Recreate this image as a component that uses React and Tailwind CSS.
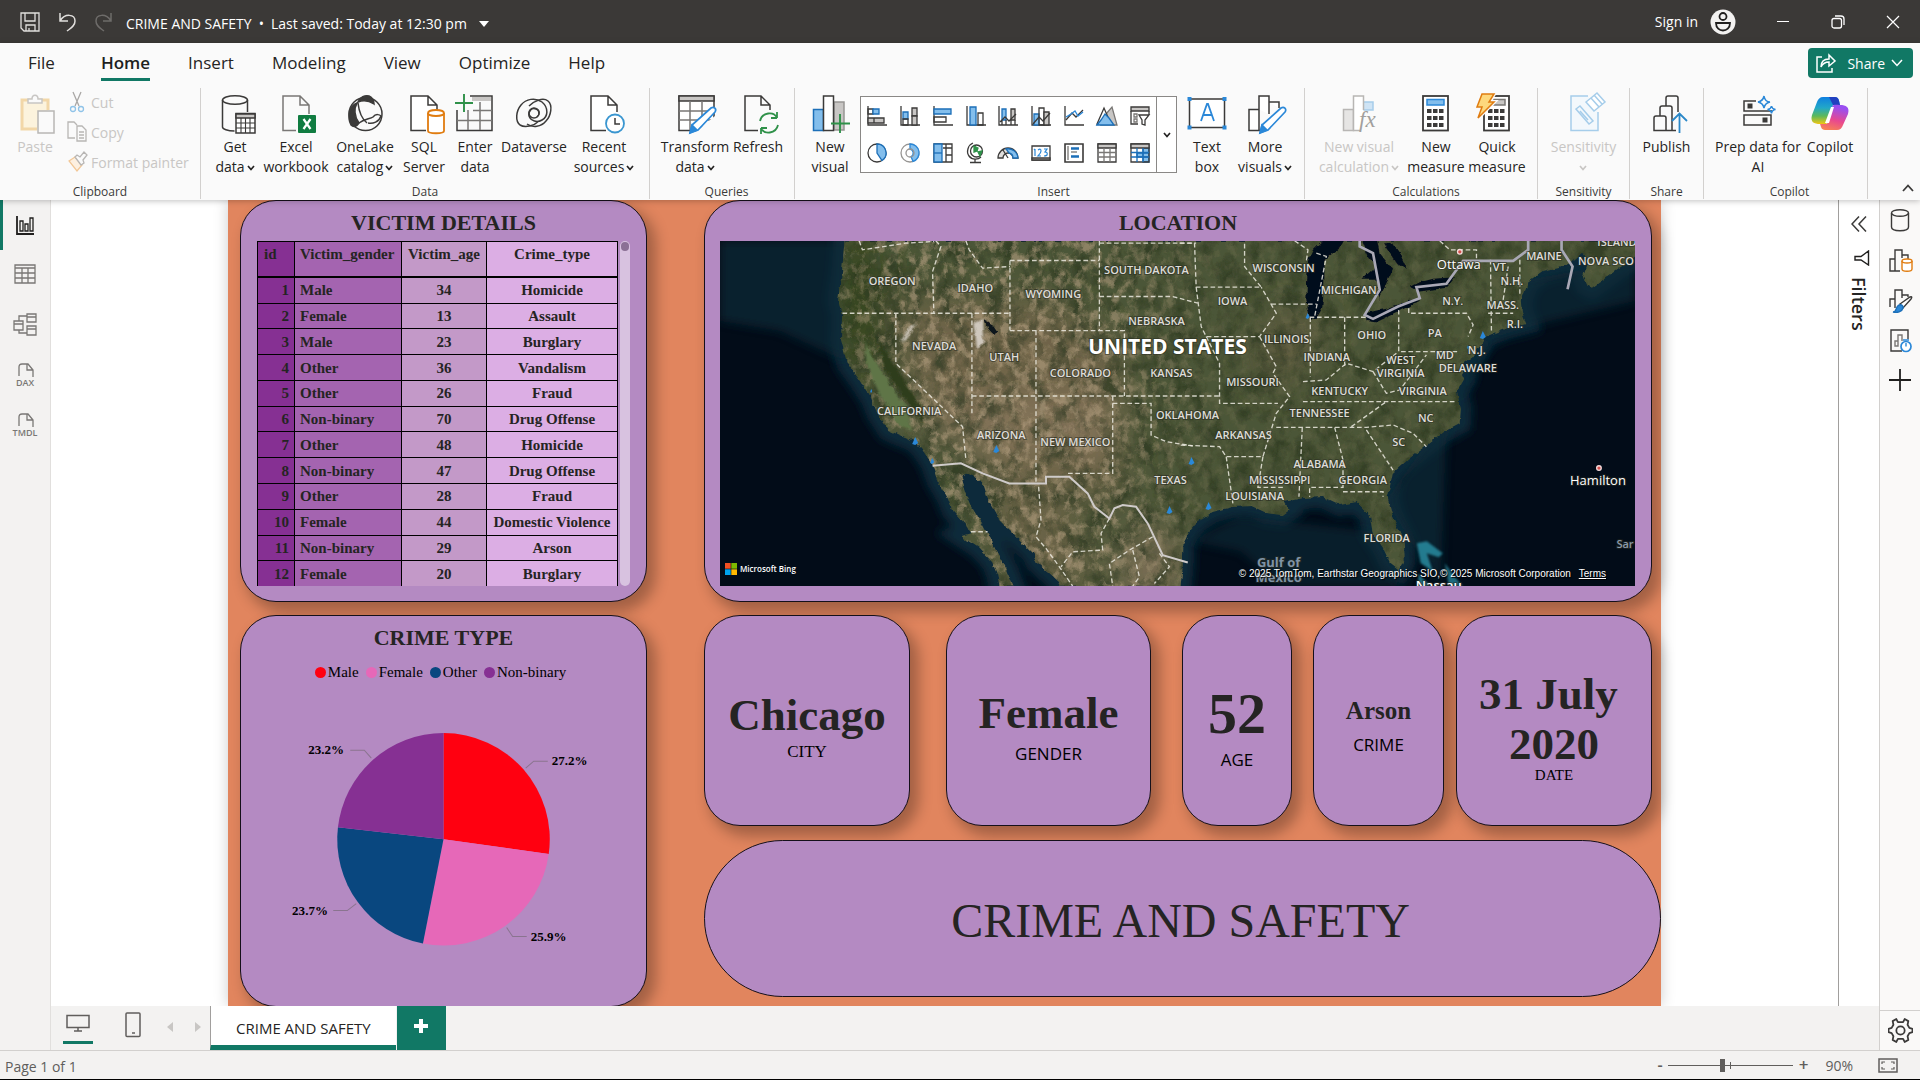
import React from "react";

const INK = "#3b3a39";
const GRAY = "#797775";
const BLUE = "#2b88d8";
const SKY = "#83beec";
const GREEN = "#2f9149";

/* ---------- large ribbon icons (40 x 40 grid) ---------- */
const Big = ({ children }) => (
  <svg viewBox="0 0 40 40" className="h-10 w-10 shrink-0 overflow-visible" fill="none" stroke={INK} strokeWidth="1.5">
    {children}
  </svg>
);
const Doc = () => (
  <>
    <path d="M22 37H7V2h17l9 9v8" fill="#fff" stroke="none" />
    <path d="M22 36.5H7V2h17l9 9v7M24 2v9h9" />
  </>
);

const PasteIcon = () => (
  <Big>
    <path d="M22 35H7V6h26v10" fill="#fcf3dd" stroke="#f2d7a8" strokeWidth="3" />
    <path d="M13 9V5h4c0-5 6-5 6 0h4v4z" fill="#fafafa" stroke="#c8c6c4" />
    <rect x="23" y="17" width="16" height="22" fill="#fafafa" stroke="#b8b6b4" />
  </Big>
);
const GetDataIcon = () => (
  <Big>
    <ellipse cx="20" cy="6" rx="12.5" ry="4.3" />
    <path d="M7.500 6v27c0 2 5 4 12 4M32.500 6v12" />
    <rect x="21" y="19.500" width="19" height="19.500" fill="#fff" />
    <path d="M21 20h19v4H21z" fill="#c8c6c4" />
    <path d="M21 29h19M21 34h19M26 24v15M30.500 24v15M35 24v15" strokeWidth="1.100" />
  </Big>
);
const ExcelIcon = () => (
  <Big>
    <path d="M20 36.500H7V2h17l9 9v9M24 2v9h9" stroke={GRAY} />
    <rect x="22" y="21" width="18" height="18" rx="1" fill="#107c41" stroke="none" />
    <path d="M27.500 25l7 10M34.500 25l-7 10" stroke="#fff" strokeWidth="2.200" />
  </Big>
);
const OneLakeIcon = () => (
  <Big>
    <circle cx="20.500" cy="20" r="16.500" />
    <path d="M13 8c2-5 7-7 11-6 4 2 5 6 5 8-6-4-11-4-16-2z" fill={INK} />
    <path d="M12 9C4 12 2 23 6 31c3 3 6 1 8-2C9 22 9 14 12 9z" fill={INK} />
    <path d="M13 9c1 9 4 16 9 20M14 29c5-4 11-4 14-6 3-4 7-2 8-1M23 29c5 1 11-1 13-7" />
  </Big>
);
const SqlIcon = () => (
  <Big>
    <Doc />
    <path d="M24 19v18c0 3 16 3 16 0V19" fill="#fff" stroke="#e07c10" strokeWidth="1.800" />
    <ellipse cx="32" cy="19" rx="8" ry="3" fill="#fff" stroke="#e07c10" strokeWidth="1.800" />
  </Big>
);
const EnterIcon = () => (
  <Big>
    <path d="M15 2h22v34.500H2V16" />
    <path d="M17 3h19v4H17z" fill="#c8c6c4" stroke="none" />
    <path d="M2 26.500h35M18 16.500h19M13 16v20M25 8v28" stroke={GRAY} />
    <path d="M9 0v18M0 9h18" stroke={GREEN} strokeWidth="1.900" />
  </Big>
);
const DataverseIcon = () => (
  <Big>
    <path d="M25 27c-5 5-14 7-19 4-5-4-4-14 1-20 5-6 14-8 21-3 7 6 6 15 0 18-5 3-11 1-13-4-1-5 3-9 7-7 4 1 4 6 1 8" />
    <path d="M15 12c5-5 14-9 19-5 5 4 3 15-2 20-5 6-13 7-19 3" />
    <circle cx="20" cy="19" r="5" />
  </Big>
);
const RecentIcon = () => (
  <Big>
    <Doc />
    <circle cx="31" cy="29.500" r="9" fill="#fff" stroke="#3a96d0" strokeWidth="1.800" />
    <path d="M31 24v6h5" />
  </Big>
);
const Pencil = () => (
  <path d="M15 39l2-8 19-17c3-2 6 1 4 4L23 36z" fill="#fff" stroke={BLUE} strokeWidth="1.700" />
);
const TransformIcon = () => (
  <Big>
    <rect x="4" y="2" width="35" height="34.500" fill="#fff" />
    <path d="M4 2h35v5H4z" fill="#c8c6c4" />
    <path d="M4 17h35M4 26h35M15 7v29M27 7v29" stroke={GRAY} />
    <path d="M18 40l22-18v18z" fill="#fafafa" stroke="none" />
    <Pencil />
    <path d="M15 39l2-8 5 5z" fill={BLUE} stroke={BLUE} />
  </Big>
);
const RefreshIcon = () => (
  <Big>
    <path d="M20 36.500H7V2h16l9 9v5M23 2v9h9" />
    <path d="M22 27c2-9 14-10 17-3v-6M39 24h-6M40 31c-2 9-14 10-17 3v6M23 34h6" stroke={GREEN} strokeWidth="1.800" />
  </Big>
);
const NewVisualIcon = () => (
  <Big>
    <rect x="24" y="8" width="10" height="28" fill="#c8c6c4" stroke="#979593" />
    <rect x="3.500" y="15.500" width="10" height="21" fill={SKY} stroke="#1c6fb8" />
    <rect x="13.500" y="2" width="10" height="34.500" fill="#fff" />
    <path d="M30 20v19M21 29.500h19" stroke={GREEN} strokeWidth="1.900" />
  </Big>
);
const TextBoxIcon = () => (
  <Big>
    <rect x="2.500" y="5" width="35" height="28.500" fill="#fff" />
    <path d="M14 27l6-17h1l6 17M16 21h9" stroke={BLUE} strokeWidth="1.800" />
    <g fill={BLUE} stroke="none">
      <rect x="0.500" y="3" width="4" height="4" />
      <rect x="35.500" y="3" width="4" height="4" />
      <rect x="0.500" y="31.500" width="4" height="4" />
      <rect x="35.500" y="31.500" width="4" height="4" />
    </g>
  </Big>
);
const MoreVisualsIcon = () => (
  <Big>
    <path d="M15 36.500H4v-21h10v21M14 15.500V2h10v18M24 8h10v6" fill="#fff" />
    <Pencil />
    <path d="M15 39l2-8 5 5z" fill={BLUE} stroke={BLUE} />
  </Big>
);
const CalcFxIcon = () => (
  <Big>
    <g stroke="#b8b6b4">
      <rect x="24" y="8" width="10" height="8" fill="#cfe4f5" stroke="#a6cdea" />
      <rect x="4.500" y="15.500" width="10" height="21" fill="#e6e5e4" />
      <path d="M22 36.500h-7.500V2h10v14" fill="#fff" />
    </g>
    <text x="20" y="33" fill="#a19f9d" stroke="none" fontSize="23" fontStyle="italic" fontFamily="'Liberation Serif', serif">
      fx
    </text>
  </Big>
);
const Keys = ({ y0 = 15 }) => (
  <g fill={INK} stroke="none">
    {[0, 1, 2].map((r) =>
      [0, 1, 2].map((c) => <rect key={`${r}${c}`} x={11 + c * 6} y={y0 + r * 7} width="4.500" height="4" />)
    )}
  </g>
);
const MeasureIcon = () => (
  <Big>
    <rect x="7" y="2" width="25" height="34.500" fill="#fff" strokeWidth="1.800" />
    <rect x="11" y="5.500" width="17" height="5.500" fill={SKY} stroke={BLUE} />
    <Keys />
  </Big>
);
const QuickIcon = () => (
  <Big>
    <rect x="7" y="2" width="25" height="34.500" fill="#fff" strokeWidth="1.800" />
    <rect x="17" y="5.500" width="11" height="5.500" fill="#c8c6c4" stroke={GRAY} />
    <Keys />
    <path d="M5 0h12l-5 8h5L1 24l4-11H0z" fill="#fdd87d" stroke="#fafafa" strokeWidth="4" />
    <path d="M5 0h12l-5 8h5L1 24l4-11H0z" fill="#fdd87d" stroke="#e07c10" />
  </Big>
);
const SensitivityIcon = () => (
  <Big>
    <g stroke="#a6cdea">
      <path d="M24 2H7v34.500h27V18" fill="#f3f8fc" />
      <path d="M12 15l4-3 13 15-4 3zM16 17l8 9" />
      <path d="M22 8l5-4 8 9-5 4zM27 4l6-5 8 9-6 5M30 1l8 9" fill="#fff" />
    </g>
  </Big>
);
const PublishIcon = () => (
  <Big>
    <path d="M7 36.500V24q0-2 2-2h8q2 0 2 2v12.500zM13 22v-8q0-2 2-2h8q2 0 2 2v22.500h-6M19 12V4q0-2 2-2h8q2 0 2 2v14M25 36.500h4" />
    <path d="M32.500 39V20M25 27l7.500-7.500L40 27" stroke="#2b88c8" strokeWidth="1.800" />
  </Big>
);
const PrepIcon = () => (
  <Big>
    <path d="M18 7H6v10h27v-1M6 21h27v10H6z" />
    <path d="M9.500 9.500h5v5h-5zM24.500 23.500h5v5h-5z" fill={INK} stroke="none" />
    <path d="M26 2q1 6 6 6-5 1-6 6-1-5-6-6 5-1 6-6zM33.500 12q.5 3 4 3.500-3.500.500-4 4-.5-3.500-4-4 3.500-.5 4-3.500z" stroke={BLUE} />
  </Big>
);
const CopilotIcon = () => (
  <Big>
    <defs>
      <linearGradient id="cpA" x1="0" y1="0" x2="0" y2="1">
        <stop offset="0" stopColor="#0f7fe0" />
        <stop offset=".4" stopColor="#22a8c8" />
        <stop offset=".7" stopColor="#5db95a" />
        <stop offset="1" stopColor="#f3c613" />
      </linearGradient>
      <linearGradient id="cpB" x1="0.300" y1="0" x2="0" y2="1">
        <stop offset="0" stopColor="#9a4ff0" />
        <stop offset=".5" stopColor="#e8488f" />
        <stop offset="1" stopColor="#fb8b4a" />
      </linearGradient>
    </defs>
    <g stroke="none">
      <path d="M13 3h12c4 0 4 4 5 8h-7l-5 17c-1 3-4 2-8 2-6 0-10-2-8-9L7 8c1-3 3-5 6-5z" fill="url(#cpA)" />
      <path d="M19 3h6c4 0 4 4 5 8h-7z" fill="#2140c0" />
      <path d="M27 36H15c-4 0-4-4-5-6h7l5-17c1-3 4-2 8-2 6 0 10 2 8 9l-5 11c-1 3-3 5-6 5z" fill="url(#cpB)" />
      <path d="M21 13h3l-5 16h-4z" fill="#fff" />
    </g>
  </Big>
);

/* ---------- small gallery icons (20 x 20 grid) ---------- */
const Sm = ({ children, size = "h-5 w-5" }) => (
  <svg viewBox="0 0 20 20" className={`${size} shrink-0 overflow-visible`} fill="none" stroke={INK} strokeWidth="1.300">
    {children}
  </svg>
);
const DB = "#1c6fb8";
const gallery = [
  ["Stacked bar chart", <><path d="M1 0v19h19" /><path d="M1 3h5v5H1z" /><path d="M6 3h6v5H6z" fill={SKY} stroke={DB} /><path d="M1 12h6v5H1zM7 12h10v5H7z" fill="#c8c6c4" /></>],
  ["Stacked column chart", <><path d="M1 0v19h19" /><path d="M3 6h5v7H3z" fill={SKY} stroke={DB} /><path d="M3 13h5v6H3z" /><path d="M12 2h5v8h-5z" fill="#c8c6c4" /><path d="M12 10h5v9h-5z" fill="#c8c6c4" /></>],
  ["Clustered bar chart", <><path d="M1 0v19h19" /><path d="M1 3h17v5H1z" fill={SKY} stroke={DB} /><path d="M1 11h12v5H1z" /></>],
  ["Clustered column chart", <><path d="M1 0v19h19" /><path d="M4 1h6v18H4z" fill={SKY} stroke={DB} /><path d="M12 7h5v12h-5z" /></>],
  ["Line and stacked column chart", <><path d="M1 0v19h19" /><path d="M4 3h4v11H4z" fill={SKY} stroke={DB} /><path d="M13 3h4v11h-4z" fill="#c8c6c4" /><path d="M2 16l5-5 4 4 7-7M4 14v5M8 14v5M13 14v5M17 14v5" /></>],
  ["Line and clustered column chart", <><path d="M1 0v19h19" /><path d="M3 8h5v11H3z" fill={SKY} stroke={DB} /><path d="M8 2h5v17H8z" /><path d="M13 6h5v13h-5z" fill="#c8c6c4" /><path d="M2 18l6-7 4 4 7-8" /></>],
  ["Line chart", <><path d="M1 0v19h19" /><path d="M2 14l6-7 4 4 7-7" /><path d="M2 11l5-3 4-3 3 5 5-4" stroke={BLUE} /></>],
  ["Area chart", <><path d="M9 8l6-7 5 18H4z" fill="#c8c6c4" stroke={GRAY} /><path d="M0 18L7 2l7 16z" fill="#fff" /><path d="M0 19l4-5 4-6 4 4 5 7z" fill={SKY} stroke={DB} /></>],
  ["Slicer", <><path d="M1 1h18v4H1z" fill="#c8c6c4" /><path d="M1 5v13h7M19 5v4" /><path d="M4 8h3v3H4zM4 13h3v3H4z" stroke={GRAY} /><path d="M9 9h10l-4 5v5l-3-1v-4z" fill="#fff" /></>],
  ["Pie chart", <><circle cx="10" cy="10" r="9" /><path d="M10 1a9 9 0 0 1 5 16.500L10 10z" fill={SKY} stroke={DB} /></>],
  ["Donut chart", <><circle cx="10" cy="10" r="9" stroke="#979593" /><path d="M10 1a9 9 0 0 1 3 17.500l-2-5A4 4 0 0 0 10 6z" fill={SKY} stroke={BLUE} /><circle cx="10" cy="10" r="4" stroke="#979593" /></>],
  ["Treemap", <><path d="M1 1h18v18H1zM13 1v18M10 5h9M13 12h6" /><path d="M1 1h8v18H1z" fill={SKY} stroke={DB} /><path d="M1 10h8" stroke={DB} /></>],
  ["Map", <><circle cx="10.500" cy="8" r="6" /><path d="M8 3l4 2-1 3-3 1zM12 9l4-1-2 5z" fill={GREEN} stroke={GREEN} /><path d="M7 0C2 2 0 9 3 13c3 4 9 4 12 1M9 16v3M4 19.500h11" /></>],
  ["Gauge", <><path d="M0 15a10 10 0 0 1 20 0h-5a5 5 0 0 0-10 0z" fill="#e1dfdd" /><path d="M8 6a10 10 0 0 1 12 9h-5a5 5 0 0 0-4-5z" fill={SKY} stroke={DB} /><path d="M10 15L5 7" /></>],
  ["Card", <><path d="M1 3h18v14H1z" /><path d="M1 15h18v2H1z" fill="#c8c6c4" /><path d="M4 6v7M3 7l1-1M7 7q3-2 3 1 0 2-3 5h3M13 6h3l-2 3q3 0 2 3-1 1-3 1" stroke={BLUE} strokeWidth="1.200" /></>],
  ["Multi-row card", <><path d="M1 1h18v18H1z" strokeWidth="1.600" /><path d="M4 3v14" stroke={GRAY} /><path d="M7 5.500h8M7 13.500h8" stroke={DB} strokeWidth="2.400" /><path d="M7 9h6" stroke={GRAY} /></>],
  ["Table", <><path d="M1 1h18v18H1z" /><path d="M1 1h18v4H1z" fill="#c8c6c4" /><path d="M1 9.500h18M1 14h18M7 5v14M13 5v14" stroke={GRAY} /></>],
  ["Matrix", <><path d="M13 5h6v14h-6zM7 10h12v4H7z" fill={SKY} stroke={DB} /><path d="M1 1h18v18H1z" /><path d="M1 1h18v4H1z" fill="#c8c6c4" /><path d="M1 9.500h18M1 14h18M7 5v14M13 5v14" stroke={DB} /></>],
];

/* ---------- ribbon pieces ---------- */
const Chev = ({ className = "" }) => (
  <svg viewBox="0 0 8 6" className={`inline-block h-[6px] w-2 ${className}`} fill="none" stroke="currentColor" strokeWidth="1.700">
    <path d="M1 1l3 3.500L7 1" />
  </svg>
);
const Tool = ({ icon, lines, chev, w, disabled }) => (
  <button type="button" disabled={disabled} className={`flex shrink-0 flex-col items-center ${w} ${disabled ? "text-[#c8c6c4]" : "text-[#252423]"}`}>
    {icon}
    <span className="mt-[3px] block text-center text-[14px] leading-5 whitespace-nowrap">
      {lines.map((l, i) => (
        <span key={i} className="block">
          {l}
          {chev && i === lines.length - 1 && <Chev className={l ? "ml-[2px]" : ""} />}
        </span>
      ))}
    </span>
  </button>
);
const Group = ({ label, className = "", children }) => (
  <section aria-label={label} className={`flex h-[111px] shrink-0 flex-col border-r border-[#d2d0ce] ${className}`}>
    <div className="flex flex-1 items-start pt-[6px]">{children}</div>
    <div className="text-center text-[12px] leading-[14px] text-[#3b3a39]">{label}</div>
  </section>
);
const ClipTool = ({ icon, label }) => (
  <button type="button" disabled className="flex h-[30px] items-center gap-1 text-[14px] text-[#c8c6c4]">
    {icon}
    {label}
  </button>
);

function TitleBar() {
  return (
    <header className="flex h-[43px] shrink-0 items-center bg-[#3b3937] text-white">
      <div className="flex items-center gap-[17px] pl-5">
        <button type="button" aria-label="Save">
          <Sm><g stroke="#e1dfdd"><path d="M1 1h18v18H4l-3-3zM5 1v8h10V1M6 19v-6h9v6M9 19v-3" /></g></Sm>
        </button>
        <button type="button" aria-label="Undo">
          <Sm><path d="M3 1v8h8M3 9C8 1 18 2 18 9c0 5-4 7-8 10" stroke="#e1dfdd" strokeWidth="1.500" /></Sm>
        </button>
        <button type="button" aria-label="Redo">
          <Sm><path d="M17 1v8H9M17 9C12 1 2 2 2 9c0 5 4 7 8 10" stroke="#6e6c6a" strokeWidth="1.500" /></Sm>
        </button>
      </div>
      <button type="button" className="ml-3 flex items-center pt-1 text-[14px]">
        <span>CRIME AND SAFETY</span>
        <span className="mx-[7px]">•</span>
        <span>Last saved: Today at 12:30 pm</span>
        <svg viewBox="0 0 10 6" className="ml-3 h-[6px] w-[10px]" fill="#fff"><path d="M0 0h10L5 6z" /></svg>
      </button>
      <div className="ml-auto flex items-center">
        <button type="button" className="flex items-center gap-3 text-[14px]">
          Sign in
          <svg viewBox="0 0 26 26" className="h-[26px] w-[26px]">
            <circle cx="13" cy="13" r="12.500" fill="#f3f2f1" />
            <g fill="none" stroke="#201f1e" strokeWidth="1.800"><circle cx="13" cy="7.500" r="3.500" /><path d="M6 14h14c0 10-14 10-14 0z" /></g>
          </svg>
        </button>
        <div className="ml-10 flex items-center gap-[41px] pr-5">
          <button type="button" aria-label="Minimize"><svg viewBox="0 0 14 14" className="h-[14px] w-[14px]" stroke="#fff"><path d="M1 6.500h12" /></svg></button>
          <button type="button" aria-label="Restore"><svg viewBox="0 0 14 14" className="h-[14px] w-[14px]" stroke="#fff" fill="none" strokeWidth="1.300"><rect x="1" y="3.500" width="9.500" height="9.500" rx="2" /><path d="M4 1h6q3 0 3 3v6" /></svg></button>
          <button type="button" aria-label="Close"><svg viewBox="0 0 14 14" className="h-[14px] w-[14px]" stroke="#fff" strokeWidth="1.200"><path d="M1 1l12 12M13 1L1 13" /></svg></button>
        </div>
      </div>
    </header>
  );
}

function Ribbon() {
  return (
    <div className="relative z-10 shrink-0 bg-[#fafafa] shadow-[0_1px_6px_rgba(0,0,0,0.25)]">
      <div className="flex h-[45px] items-start justify-between">
        <nav className="flex gap-[38px] pl-7 text-[17px] leading-6 text-[#252423]">
          {["File", "Home", "Insert", "Modeling", "View", "Optimize", "Help"].map((t) => (
            <button key={t} type="button" className={`h-[38px] border-b-[3px] pt-1 ${t === "Home" ? "ml-2 border-[#117865] font-semibold text-[#201f1e]" : "border-transparent"}`}>
              {t}
            </button>
          ))}
        </nav>
        <button type="button" className="mt-[5px] mr-[7px] flex h-[30px] items-center rounded bg-[#117865] pr-[10px] pl-2 text-[14px] text-white">
          <Sm><path d="M6 4H1v15h15v-4M5 14c0-6 3-8 8-8V2l6 6-6 5V9c-4 0-6 1-8 5z" stroke="#fff" strokeWidth="1.500" /></Sm>
          <span className="ml-[11px]">Share</span>
          <svg viewBox="0 0 12 8" className="ml-[6px] h-2 w-3" fill="none" stroke="#fff" strokeWidth="1.500"><path d="M1 1l5 5.500L11 1" /></svg>
        </button>
      </div>
      <div className="flex h-28 items-start">
        <Group label="Clipboard" className="w-[201px]">
          <Tool w="w-16 ml-[3px]" icon={<PasteIcon />} lines={["Paste"]} disabled />
          <div className="-mt-[7px]">
            <ClipTool label="Cut" icon={<Sm><path d="M6 0l6 14M14 0L8 14" stroke="#a9a7a5" /><circle cx="6" cy="17" r="2.500" stroke="#8fc3e8" /><circle cx="14" cy="17" r="2.500" stroke="#8fc3e8" /></Sm>} />
            <ClipTool label="Copy" icon={<Sm><path d="M8 16H1V0h6l3 3M10 4h5l4 4v11h-9zM12 10h5M12 13h5M12 16h5" stroke="#b8b6b4" /></Sm>} />
            <ClipTool label="Format painter" icon={<Sm><path d="M2 9l6-4 7 8-5 6z" fill="#fdf0e0" stroke="#f2c796" /><path d="M8 5l2-2 3 2 4-5 3 3-4 5 1 3-3 2z" fill="#fafafa" stroke="#b8b6b4" /></Sm>} />
          </div>
        </Group>
        <Group label="Data" className="w-[449px] px-[7px]">
          <Tool w="w-[54px]" icon={<GetDataIcon />} lines={["Get", "data"]} chev />
          <Tool w="w-[68px]" icon={<ExcelIcon />} lines={["Excel", "workbook"]} />
          <Tool w="w-[70px]" icon={<OneLakeIcon />} lines={["OneLake", "catalog"]} chev />
          <Tool w="w-12" icon={<SqlIcon />} lines={["SQL", "Server"]} />
          <Tool w="w-[54px]" icon={<EnterIcon />} lines={["Enter", "data"]} />
          <Tool w="w-16" icon={<DataverseIcon />} lines={["Dataverse"]} />
          <Tool w="w-[76px]" icon={<RecentIcon />} lines={["Recent", "sources"]} chev />
        </Group>
        <Group label="Queries" className="w-[145px] pl-[9px]">
          <Tool w="w-[72px]" icon={<TransformIcon />} lines={["Transform", "data"]} chev />
          <Tool w="w-[54px]" icon={<RefreshIcon />} lines={["Refresh"]} />
        </Group>
        <Group label="Insert" className="w-[510px] pl-2">
          <Tool w="w-[54px]" icon={<NewVisualIcon />} lines={["New", "visual"]} />
          <div className="ml-[3px] mt-[2px] flex h-[77px] w-[317px] border border-[#8a8886] bg-white">
            <div className="grid flex-1 grid-cols-9 items-center justify-items-center">
              {gallery.map(([name, art]) => (
                <button key={name} type="button" aria-label={name}><Sm>{art}</Sm></button>
              ))}
            </div>
            <button type="button" aria-label="More chart types" className="flex w-5 items-center justify-center border-l border-[#8a8886] text-[#252423]"><Chev /></button>
          </div>
          <Tool w="w-[60px]" icon={<TextBoxIcon />} lines={["Text", "box"]} />
          <Tool w="w-14" icon={<MoreVisualsIcon />} lines={["More", "visuals"]} chev />
        </Group>
        <Group label="Calculations" className="w-[233px] pl-[10px]">
          <Tool w="w-[88px]" icon={<CalcFxIcon />} lines={["New visual", "calculation"]} chev disabled />
          <Tool w="w-[66px]" icon={<MeasureIcon />} lines={["New", "measure"]} />
          <Tool w="w-14" icon={<QuickIcon />} lines={["Quick", "measure"]} />
        </Group>
        <Group label="Sensitivity" className="w-[92px]">
          <Tool w="w-[91px]" icon={<SensitivityIcon />} lines={["Sensitivity", ""]} chev disabled />
        </Group>
        <Group label="Share" className="w-[74px]">
          <Tool w="w-[73px]" icon={<PublishIcon />} lines={["Publish"]} />
        </Group>
        <Group label="Copilot" className="w-[164px] pl-2">
          <Tool w="w-[92px]" icon={<PrepIcon />} lines={["Prep data for", "AI"]} />
          <Tool w="w-[52px]" icon={<CopilotIcon />} lines={["Copilot"]} />
        </Group>
        <button type="button" aria-label="Collapse ribbon" className="mr-[6px] mb-2 ml-auto self-end">
          <svg viewBox="0 0 12 8" className="h-2 w-3" fill="none" stroke={INK} strokeWidth="1.800"><path d="M1 7l5-5.500L11 7" /></svg>
        </button>
      </div>
    </div>
  );
}

/* ---------- left navigation ---------- */
const NavSvg = ({ children, color = GRAY }) => (
  <svg viewBox="0 0 24 24" className="h-6 w-6 overflow-visible" fill="none" stroke={color} strokeWidth="1.300">{children}</svg>
);
const FileTag = ({ label }) => (
  <NavSvg>
    <path d="M6 13V4q0-3 3-3h6l5 6v7M14 1v6h6" />
    <text x="12" y="23" textAnchor="middle" fontSize="9" fill={GRAY} stroke="none" fontWeight="600" fontFamily="'Open Sans', sans-serif">{label}</text>
  </NavSvg>
);
function LeftNav() {
  const items = [
    ["Report view", <NavSvg color="#201f1e"><path d="M4 3v18h17" strokeWidth="1.800" /><path d="M7 8h3v10H7zM12 11h3v7h-3zM17 5h3v13h-3z" /></NavSvg>],
    ["Table view", <NavSvg><path d="M2 2h20v18H2zM2 5h20M2 10h20M2 15h20M9 5v15M15 5v15" /></NavSvg>],
    ["Model view", <NavSvg><path d="M1 8h9v9H1zM1 11h9M14 1h9v8h-9zM14 4h9M14 13h9v9h-9zM14 16h9M6 8V3h8M6 17v3h8" /></NavSvg>],
    ["DAX query view", <FileTag label="DAX" />],
    ["TMDL view", <FileTag label="TMDL" />],
  ];
  return (
    <nav className="flex w-[51px] shrink-0 flex-col border-r border-[#e1dfdd] bg-[#f3f2f1]">
      {items.map(([name, art], i) => (
        <button key={name} type="button" aria-label={name} className={`flex h-[50px] items-center justify-center border-l-[3px] pr-[3px] ${i === 0 ? "border-[#117865]" : "border-transparent"}`}>
          {art}
        </button>
      ))}
    </nav>
  );
}

/* ---------- report visuals ---------- */
const CARD = "border border-[#15101a] bg-[#b48ac2] shadow-[7px_8px_14px_2px_rgba(0,0,0,0.28)]";
const SERIF = "font-['Liberation_Serif','Times_New_Roman',serif]";

const victims = [
  ["Male", 34, "Homicide"], ["Female", 13, "Assault"], ["Male", 23, "Burglary"], ["Other", 36, "Vandalism"],
  ["Other", 26, "Fraud"], ["Non-binary", 70, "Drug Offense"], ["Other", 48, "Homicide"], ["Non-binary", 47, "Drug Offense"],
  ["Other", 28, "Fraud"], ["Female", 44, "Domestic Violence"], ["Non-binary", 29, "Arson"], ["Female", 20, "Burglary"],
];
const CardTitle = ({ children }) => (
  <h2 className={`h-10 pt-2 text-center text-[22px] leading-7 font-bold text-[#252423] ${SERIF}`}>{children}</h2>
);

function VictimDetails() {
  return (
    <section className={`rounded-[36px] pb-[15px] ${CARD}`}>
      <CardTitle>VICTIM DETAILS</CardTitle>
      <div className="mx-4 flex h-[345px] gap-[2px]">
        <table className={`h-full flex-1 table-fixed border-collapse text-[15px] leading-4 font-bold text-[#252423] ${SERIF}`}>
          <colgroup>
            <col className="w-[37px]" /><col className="w-[107px]" /><col className="w-[85px]" /><col />
          </colgroup>
          <thead>
            <tr className="h-[35px] align-top">
              <th className="border border-b-2 border-black bg-[#863093] pt-1 pl-[6px] text-left">id</th>
              <th className="border border-b-2 border-black bg-[#a464b0] pt-1 pl-[5px] text-left">Victim_gender</th>
              <th className="border border-b-2 border-black bg-[#c399c8] pt-1 text-center">Victim_age</th>
              <th className="border border-b-2 border-black bg-[#dcaee4] pt-1 text-center">Crime_type</th>
            </tr>
          </thead>
          <tbody>
            {victims.map(([g, a, c], i) => (
              <tr key={i}>
                <td className="border border-b-0 border-black bg-[#863093] pr-[5px] text-right">{i + 1}</td>
                <td className="border border-b-0 border-black bg-[#a464b0] pl-[5px]">{g}</td>
                <td className="border border-b-0 border-black bg-[#c399c8] text-center">{a}</td>
                <td className="border border-b-0 border-black bg-[#dcaee4] text-center whitespace-nowrap">{c}</td>
              </tr>
            ))}
          </tbody>
        </table>
        <div className="w-[10px] rounded-full bg-[#d8c2e0] p-px"><div className="h-[9px] rounded-full bg-[#8b7095]" /></div>
      </div>
    </section>
  );
}

const slices = [
  { name: "Male", value: 27.2, color: "#ff0010", dot: "bg-[#ff0010]", line: "284,78 292,71 306,71", tx: 310, ty: 75 },
  { name: "Female", value: 25.9, color: "#e668b8", dot: "bg-[#e668b8]", line: "265,237 271,246 285,246", tx: 289, ty: 250 },
  { name: "Other", value: 23.7, color: "#09477f", dot: "bg-[#09477f]", line: "92,220 106,220 115,213", tx: 51, ty: 224 },
  { name: "Non-binary", value: 23.2, color: "#863093", dot: "bg-[#863093]", line: "109,60 123,60 130,68", tx: 67, ty: 64 },
];
function CrimeType() {
  const cx = 202, cy = 149, r = 106;
  let acc = 0;
  const pt = (p) => {
    const a = (p / 100) * 2 * Math.PI;
    return `${cx + r * Math.sin(a)} ${cy - r * Math.cos(a)}`;
  };
  return (
    <section className={`-mb-px flex-1 rounded-[36px] ${CARD}`}>
      <CardTitle>CRIME TYPE</CardTitle>
      <ul className={`mt-[6px] flex justify-center gap-[7px] pr-[6px] text-[15px] leading-5 text-black ${SERIF}`}>
        {slices.map((s) => (
          <li key={s.name} className="flex items-center gap-[2px]">
            <span className={`h-[11px] w-[11px] rounded-full ${s.dot}`} />{s.name}
          </li>
        ))}
      </ul>
      <svg viewBox="0 0 404 300" className="mt-2 w-full" role="img" aria-label="Crime share by gender">
        {slices.map((s) => {
          const a = pt(acc);
          acc += s.value;
          return <path key={s.name} d={`M${cx} ${cy}L${a}A${r} ${r} 0 0 1 ${pt(acc)}Z`} fill={s.color} />;
        })}
        {slices.map((s) => (
          <g key={s.name}>
            <polyline points={s.line} fill="none" stroke="#8a748f" />
            <text x={s.tx} y={s.ty} fontSize="13" fontWeight="700" fontFamily="'Liberation Serif', serif">{s.value}%</text>
          </g>
        ))}
      </svg>
    </section>
  );
}

const LAND =
  "M125 -9L122 31 118 59 122 74 121 99 127 122 139 139 151 157 157 172 168 189 179 194 194 200 201 207 211 222 217 239 227 256 232 269 246 284 251 292 241 295 259 307 272 321 277 334 281 355H297L287 329 277 312 269 296 261 281 252 266 246 252 241 236 245 231 256 237 264 246 269 261 279 279 296 296 312 312 316 321 336 339 345 355H459L462 326 463 302 468 292 477 281 492 271 512 266 531 265 546 272 562 274 569 269 564 261 582 257 602 256 619 264 636 261 649 274 652 292 662 306 669 321 679 329 684 319 683 299 672 276 667 256 672 232 689 217 706 204 722 191 739 182 740 168 736 151 744 137 739 126 752 116 761 102 764 96 786 87 806 82 802 72 801 59 807 42 822 31 839 27 852 21 862 12 868 20 862 36 865 44 871 47 889 34 925 8V-9Z";
const places = [
  ["OREGON", 172, 44], ["IDAHO", 255, 51], ["WYOMING", 333, 57], ["SOUTH DAKOTA", 426, 33], ["NEBRASKA", 436, 84], ["NEVADA", 214, 109],
  ["UTAH", 284, 120], ["COLORADO", 360, 136], ["KANSAS", 451, 136], ["CALIFORNIA", 189, 174], ["ARIZONA", 281, 198], ["NEW MEXICO", 355, 205],
  ["OKLAHOMA", 467, 178], ["TEXAS", 450, 243], ["WISCONSIN", 563, 31], ["MICHIGAN", 628, 53], ["IOWA", 512, 64], ["ILLINOIS", 566, 102],
  ["INDIANA", 606, 120], ["OHIO", 651, 98], ["PA", 714, 96], ["N.Y.", 732, 64], ["MASS.", 782, 68], ["N.H.", 791, 44], ["VT.", 780, 30],
  ["MAINE", 823, 19], ["NOVA SCO", 885, 24], ["ISLAND", 896, 5], ["R.I.", 794, 87], ["N.J.", 756, 113], ["MD", 724, 118], ["DELAWARE", 747, 131],
  ["WEST", 680, 123], ["VIRGINIA", 680, 136], ["VIRGINIA", 702, 154], ["KENTUCKY", 619, 154], ["MISSOURI", 532, 145], ["TENNESSEE", 599, 176],
  ["NC", 705, 181], ["SC", 678, 205], ["ARKANSAS", 523, 198], ["ALABAMA", 599, 227], ["MISSISSIPPI", 559, 243], ["GEORGIA", 642, 243],
  ["LOUISIANA", 534, 259], ["FLORIDA", 666, 301],
];
const pins = [[151, 150, 1], [195, 200, 3], [212, 220, 2], [276, 208, 3], [471, 220, 3], [449, 269, 3], [488, 265, 3], [587, 75, 2], [762, 94, 3], [747, 106, 1]];

function SatelliteMap() {
  return (
    <svg viewBox="0 0 914 345" preserveAspectRatio="xMidYMid slice" className="h-full w-full" role="img" aria-label="Map of the United States" fontFamily="'Open Sans', sans-serif">
      <defs>
        <clipPath id="land"><path d={LAND} /></clipPath>
        <filter id="b30"><feGaussianBlur stdDeviation="18" /></filter>
        <filter id="b6"><feGaussianBlur stdDeviation="5" /></filter>
        <filter id="b1"><feGaussianBlur stdDeviation="1" /></filter>
        <filter id="light" x="0" y="0" width="1" height="1" colorInterpolationFilters="sRGB">
          <feTurbulence type="fractalNoise" baseFrequency="0.110 0.085" numOctaves="5" seed="8" />
          <feColorMatrix values="0 0 0 0 0.690  0 0 0 0 0.610  0 0 0 0 0.490  3.400 0 0 0 -1.550" />
        </filter>
        <filter id="dark" x="0" y="0" width="1" height="1" colorInterpolationFilters="sRGB">
          <feTurbulence type="fractalNoise" baseFrequency="0.060 0.045" numOctaves="6" seed="21" />
          <feColorMatrix values="0 0 0 0 0.160  0 0 0 0 0.210  0 0 0 0 0.120  0 2.800 0 0 -1.150" />
        </filter>
        <filter id="rough"><feTurbulence type="fractalNoise" baseFrequency="0.120" numOctaves="3" seed="2" /><feDisplacementMap in="SourceGraphic" scale="5" xChannelSelector="R" yChannelSelector="G" /></filter>
        <linearGradient id="westFade"><stop offset=".12" stopColor="#fff" stopOpacity=".45" /><stop offset=".22" stopColor="#fff" stopOpacity=".85" /><stop offset=".42" stopColor="#fff" stopOpacity=".8" /><stop offset=".54" stopColor="#fff" stopOpacity=".16" /><stop offset="1" stopColor="#fff" stopOpacity=".1" /></linearGradient>
        <mask id="west"><rect width="914" height="345" fill="url(#westFade)" /></mask>
      </defs>
      <rect width="914" height="345" fill="#020c18" />
      <path d={LAND} fill="none" stroke="#0a2c3a" strokeWidth="22" filter="url(#b6)" />
      <path d="M0 0H125V120L60 90 0 80zM760 100L830 80 914 60V20L800 40 740 160 700 210 665 260 690 300 720 345 725 200z" fill="#0a2937" opacity=".7" filter="url(#b6)" />
      <path d="M470 300L520 275 650 290 680 345H560L520 310z" fill="#0a2937" opacity=".6" filter="url(#b6)" />
      <g filter="url(#rough)">
        <g clipPath="url(#land)">
          <rect width="914" height="345" fill="#4c5637" />
          <g filter="url(#b30)">
            <path d="M180 60L330 60 400 110 400 260 260 220 190 150z" fill="#6f6549" />
            <path d="M240 160L380 160 400 210 300 210 190 190z" fill="#85745a" />
            <path d="M330 210L380 345H290L260 230z" fill="#6b6446" />
            <path d="M400 290h60v70h-60z" fill="#7a6e54" />
            <path d="M560 70L610 80 560 150 530 120z" fill="#605c3f" />
            <path d="M120 0h40v120h-40z" fill="#33421f" />
          </g>
          <rect width="914" height="345" filter="url(#dark)" opacity=".65" />
          <g mask="url(#west)"><rect width="914" height="345" filter="url(#light)" opacity=".8" /></g>
          <path d="M145 100L155 120 185 165 192 190 180 186 160 155 146 122z" fill="#5f7446" filter="url(#b1)" />
          <path d="M155 95L175 125 200 165 205 185 190 165 165 130z" fill="#2d3c1f" filter="url(#b1)" />
          <path d="M253 82L263 78 264 100 257 108zM190 86L196 82 186 98 180 102z" fill="#cfc8bd" filter="url(#b1)" />
          <path d="M264 79L272 84 277 91 274 95 268 89z" fill="#0b141b" />
        </g>
        <g transform="translate(459 -41) scale(0.3333)" fill="#060e1c">
          <path d="M385 180L400 150 440 110H500L480 145 435 180 434 250 428 325 410 356H390L380 300z" />
          <path d="M540 110L565 170 588 200 545 240 590 240 600 300 620 250 640 210 600 160 590 110zM610 130L650 190 682 207 660 160 640 130z" />
          <path d="M552 340L562 360 595 365 650 338 722 302 690 300 620 327zM690 262L715 276 800 264 826 232 760 237 720 247z" />
        </g>
      </g>
      <path d="M696 302L706 300 722 312 718 316 706 312 712 330 700 322z" fill="#2b93a8" opacity=".8" filter="url(#b1)" />
      <path d="M724 322L736 338 742 345H728zM697 332L710 345H698z" fill="#2b93a8" opacity=".7" filter="url(#b1)" />
      <g fill="none" stroke="#eceae0" strokeOpacity=".85" strokeWidth="4" strokeDasharray="14 8">
        <path
          transform="translate(-21 -41) scale(0.3333)"
          d="M480 123L490 150 620 130 705 125M710 123L725 140 700 215 704 340M430 340H932M932 182V392M932 182H1200M1200 123V392M800 123L810 150 850 205 932 200M590 340V490L790 680 800 780M818 340V640M818 588H1560M932 392H1275V588M1010 392V845M1240 588V820H1100M1240 610H1355V705L1400 725 1480 738M1200 290H1420L1495 310M1200 130H1490M1018 860L1025 960 1010 1010 1040 1045 1080 1100 1120 1158M1230 955L1205 1000 1210 1050 1120 1055 1085 1100M1360 1010L1290 1050 1230 1090 1240 1158M1300 1050L1320 1130 1300 1158M1380 1060L1410 1100 1365 1150M815 995H865"
        />
        <path
          transform="translate(459 -41) scale(0.3333)"
          d="M0 130H45L50 262H245L195 200V130M50 262L65 380 80 410H240L290 340 245 262M275 313H410M80 410L120 490V610H295M240 410L290 500 280 520 330 590 290 640 250 770H140L120 740 0 735M140 770L160 910M392 352V530M390 352H560M495 352V500M657 330V455H840M687 325V340H860L880 375 865 410M925 340H1000M932 180L935 400M970 300L985 200M1020 180V290M370 545L440 540 500 490 580 515 650 460M580 515L620 580 660 570 740 465M370 605H830M290 682H560L640 675 700 700 740 740M515 680L620 605M368 682L358 890M465 682L490 780V862H390V890M490 875H610V890M560 690L640 810M250 770L235 862H310M780 123L810 150H890V180M410 160L440 170 405 350M345 123L385 150 380 185"
        />
      </g>
      <g fill="none" stroke="#cfcbca" strokeWidth="6">
        <path transform="translate(-21 -41) scale(0.3333)" d="M700 797L785 790 850 820 930 850H1040V830H1110L1165 880 1185 920 1230 955 1245 925 1270 915 1310 920 1345 970 1390 1065 1465 1087" />
        <path transform="translate(459 -41) scale(0.3333)" stroke="#a9a8b5" strokeWidth="8" d="M540 123V140L580 160 600 270 555 345 580 357 655 320 720 295 710 262 800 252 850 183H1000L1045 150V123M1145 123V150L1178 200 1163 268" />
      </g>
      <g fill={BLUE}>
        {pins.map(([x, y, s]) => <path key={`${x}`} d={`M${x - s} ${y + s}L${x} ${y - s - 1}L${x + s} ${y + s - 1}L${x} ${y + s + 1}Z`} />)}
      </g>
      <g fontSize="11" fontWeight="600" fill="#dedcd8" stroke="#2a2d22" strokeOpacity=".55" strokeWidth="2" paintOrder="stroke" textAnchor="middle">
        {places.map(([t, x, y]) => <text key={`${t}${y}`} x={x} y={y}>{t}</text>)}
        <text x="447" y="113" fontSize="21" fontWeight="700" fill="#fff">UNITED STATES</text>
        <g fontSize="13" fontWeight="400" fill="#fff"><text x="738" y="28">Ottawa</text><text x="877" y="244">Hamilton</text></g>
        <g fontSize="13" fontWeight="700" fill="#7f93a5"><text x="558" y="326">Gulf of</text><text x="558" y="341">Mexico</text></g>
        <text x="904" y="307" fill="#8c9aa8">Sar</text>
        <text x="718" y="349" fontSize="13" fill="#fff">Nassau</text>
      </g>
      <g fill="#d4504c" stroke="#f5dcdc" strokeWidth="1.300"><circle cx="739" cy="11" r="2.300" /><circle cx="878" cy="227" r="2.300" /></g>
    </svg>
  );
}

function Location() {
  return (
    <section className={`mr-[9px] rounded-[36px] pb-[15px] ${CARD}`}>
      <CardTitle>LOCATION</CardTitle>
      <div className="relative mr-4 ml-[15px] h-[345px] overflow-hidden">
        <SatelliteMap />
        <div className="absolute bottom-[11px] left-[5px] flex items-center gap-[3px] text-[8px] font-semibold text-white">
          <svg viewBox="0 0 12 12" className="h-3 w-3"><path d="M0 0h5.700v5.700H0z" fill="#f25022" /><path d="M6.300 0H12v5.700H6.300z" fill="#7fba00" /><path d="M0 6.300h5.700V12H0z" fill="#00a4ef" /><path d="M6.300 6.300H12V12H6.300z" fill="#ffb900" /></svg>
          Microsoft Bing
        </div>
        <div className="absolute right-[29px] bottom-[6px] flex gap-2 font-['Liberation_Sans',Arial,sans-serif] text-[10px] leading-3 whitespace-nowrap text-white [text-shadow:1px_1px_1px_#000]">
          <span>© 2025 TomTom, Earthstar Geographics SIO,© 2025 Microsoft Corporation</span>
          <a href="#terms" className="underline">Terms</a>
        </div>
      </div>
    </section>
  );
}

const Kpi = ({ value, label, valueClass, labelClass, className = "" }) => (
  <section className={`flex flex-col items-center justify-center rounded-[36px] pt-3 text-center ${CARD} ${className}`}>
    <div className={`font-bold text-[#252423] ${SERIF} ${valueClass}`}>{value}</div>
    <div className={`text-black ${labelClass}`}>{label}</div>
  </section>
);

function Report() {
  return (
    <div className="flex min-w-0 flex-1 gap-[57px] bg-[#e1855e] pl-3 shadow-[0_0_14px_rgba(0,0,0,0.2)]">
      <div className="flex flex-[407_1_0%] flex-col gap-[13px]">
        <VictimDetails />
        <CrimeType />
      </div>
      <div className="flex flex-[957_1_0%] flex-col pb-[9px]">
        <Location />
        <div className="mt-[13px] mr-[9px] grid min-h-[211px] grid-cols-[206fr_241fr_141fr_152fr_208fr]">
          <Kpi value="Chicago" label="CITY" valueClass="text-[45px] leading-[50px]" labelClass={`text-[17px] leading-6 ${SERIF}`} />
          <Kpi value="Female" label="GENDER" className="ml-9" valueClass="text-[45px] leading-[50px]" labelClass="mt-1 text-[17px] leading-6" />
          <Kpi value="52" label="AGE" className="ml-[31px]" valueClass="text-[58px] leading-[64px]" labelClass="mt-[2px] text-[17px] leading-6" />
          <Kpi value="Arson" label="CRIME" className="ml-[21px]" valueClass="text-[25px] leading-7" labelClass="mt-2 text-[17px] leading-6" />
          <Kpi value={<>31 July{"\u00a0"}<br />2020</>} label="DATE" className="ml-3" valueClass="text-[45px] leading-[50px]" labelClass={`-mt-1 text-[15px] leading-5 ${SERIF}`} />
        </div>
        <section className="mt-[14px] flex min-h-[157px] flex-1 items-center justify-center rounded-[80px] border border-[#15101a] bg-[#b48ac2] pt-1 pr-1">
          <h1 className={`text-[48px] leading-[54px] text-[#252423] ${SERIF}`}>CRIME AND SAFETY</h1>
        </section>
      </div>
    </div>
  );
}

/* ---------- right panes ---------- */
function FiltersPane() {
  return (
    <aside className="flex w-[41px] shrink-0 flex-col items-center border-l border-[#a19f9d] bg-white pt-4">
      <button type="button" aria-label="Expand filters"><svg viewBox="0 0 16 16" className="h-4 w-4" fill="none" stroke={INK} strokeWidth="1.500"><path d="M8 0.500L1 8l7 7.500M15 0.500L8 8l7 7.500" /></svg></button>
      <svg viewBox="0 0 16 16" className="mt-[18px] ml-[5px] h-4 w-4" fill="none" stroke="#201f1e" strokeWidth="1.400"><path d="M14.500 1v14L7 10H1V6.500h6z" /></svg>
      <h2 className="mt-[11px] text-[18px] leading-6 font-semibold text-[#252423] [writing-mode:vertical-rl]">Filters</h2>
    </aside>
  );
}
function RightRail() {
  const art = [
    ["Data", <><ellipse cx="12" cy="5" rx="8.500" ry="3.300" /><path d="M3.500 5v14c0 5 17 5 17 0V5" /></>],
    ["Build", <><path d="M12 23H2V11h5M7 23V2h7v8M14 7h6v4" /><g stroke="#e07c10" fill="#fff"><path d="M14 13v8c0 3 10 3 10 0v-8" /><ellipse cx="19" cy="13" rx="5" ry="2" /></g></>],
    ["Format", <><path d="M2 19V11h5v9M7 11V2h7v8M14 7h6v2" /><path d="M12 16L22 9q3-1 1 2l-8 9z" fill="#fff" /><path d="M5 24c3 0 3-3 4-5 2-4 7-2 6 1-1 4-6 5-10 4z" fill={BLUE} stroke={DB} /></>],
    ["Performance", <><path d="M14 23H3V2h17v9" /><path d="M7 18v-5h3v5zM10 18V7h4v6" stroke={GRAY} /><circle cx="18" cy="18.500" r="5" fill="#fff" stroke={BLUE} strokeWidth="1.700" /><path d="M18 18.500V15M15 12h6" stroke={BLUE} /></>],
    ["Add", <path d="M1 12h22M12 1v22" stroke="#201f1e" strokeWidth="1.800" />],
  ];
  return (
    <aside className="flex w-[41px] shrink-0 flex-col border-l border-[#d2d0ce] bg-[#faf9f8]">
      <div className="flex flex-1 flex-col items-center">
        {art.map(([name, a]) => (
          <button key={name} type="button" aria-label={name} className="flex h-10 w-full items-center justify-center">
            <svg viewBox="0 0 24 24" className="h-6 w-6 overflow-visible" fill="none" stroke={INK} strokeWidth="1.400">{a}</svg>
          </button>
        ))}
      </div>
      <button type="button" aria-label="Settings" className="flex h-10 items-center justify-center border-t border-[#d2d0ce]">
        <svg viewBox="0 0 24 24" className="h-[25px] w-[25px]" fill="none" stroke={INK} strokeWidth="1.700" strokeLinejoin="round">
          <circle cx="12" cy="12" r="4" />
          <path d="M9.500 4L8 1 4.500 3l.7 3.500L3.500 9.500.5 10.500v3l3 1 1.700 3L4.500 21 8 23l1.500-3h5L16 23l3.500-2-.7-3.500 1.700-3 3-1v-3l-3-1-1.700-3L19.500 3 16 1l-1.500 3z" />
        </svg>
      </button>
    </aside>
  );
}

/* ---------- bottom bars ---------- */
function PageTabs() {
  return (
    <div className="flex h-11 shrink-0 items-stretch bg-[#f3f2f1]">
      <button type="button" aria-label="Desktop layout" className="ml-3 mb-[6px] flex w-[30px] flex-col items-center border-b-[3px] border-[#117865] pt-2">
        <svg viewBox="0 0 24 18" className="h-[18px] w-6" fill="none" stroke="#605e5c" strokeWidth="1.500"><path d="M1 1.500h22v12H1zM12 13.500V17M8 17h8" /></svg>
      </button>
      <button type="button" aria-label="Mobile layout" className="ml-8 pb-[6px]">
        <svg viewBox="0 0 16 26" className="h-[26px] w-4" fill="none" stroke="#605e5c" strokeWidth="1.500"><rect x="1" y="1" width="14" height="23.500" rx="1" /><path d="M7 21h3" /></svg>
      </button>
      <button type="button" aria-label="Previous page" className="ml-[26px] pb-[2px]"><svg viewBox="0 0 6 10" className="h-[10px] w-[6px]" fill="#c8c6c4"><path d="M6 0v10L0 5z" /></svg></button>
      <button type="button" aria-label="Next page" className="ml-[22px] pb-[2px]"><svg viewBox="0 0 6 10" className="h-[10px] w-[6px]" fill="#c8c6c4"><path d="M0 0v10l6-5z" /></svg></button>
      <button type="button" className="ml-[9px] border-b-[5px] border-l border-b-[#117865] border-l-[#a19f9d] bg-white px-[25px] pt-[5px] text-[15px] font-medium text-[#252423]">CRIME AND SAFETY</button>
      <button type="button" aria-label="New page" className="ml-px flex w-[49px] items-center justify-center bg-[#117865] pb-1">
        <svg viewBox="0 0 14 14" className="h-[14px] w-[14px]" stroke="#fff" strokeWidth="4"><path d="M7 0v14M0 7h14" /></svg>
      </button>
    </div>
  );
}
function StatusBar() {
  return (
    <footer className="flex h-[30px] shrink-0 items-center justify-between border-t border-b border-t-[#d2d0ce] border-b-black bg-[#f3f2f1] pl-[5px] text-[14px] text-[#605e5c]">
      <span className="pt-[2px]">Page 1 of 1</span>
      <div className="flex items-center pr-[22px]">
        <button type="button" aria-label="Zoom out" className="text-[16px] font-semibold">-</button>
        <div className="relative mr-[6px] ml-[5px] flex w-[125px] items-center">
          <span className="absolute left-[62px] h-[7px] w-px bg-[#605e5c]" />
          <input type="range" aria-label="Zoom" min="0" max="100" defaultValue="44" className="h-[14px] w-full appearance-none bg-transparent [&::-webkit-slider-runnable-track]:h-px [&::-webkit-slider-runnable-track]:bg-[#605e5c] [&::-webkit-slider-thumb]:-mt-[6px] [&::-webkit-slider-thumb]:h-[13px] [&::-webkit-slider-thumb]:w-[5px] [&::-webkit-slider-thumb]:appearance-none [&::-webkit-slider-thumb]:bg-[#605e5c]" />
        </div>
        <button type="button" aria-label="Zoom in" className="text-[17px] font-semibold">+</button>
        <span className="ml-[17px]">90%</span>
        <button type="button" aria-label="Fit to page" className="ml-[25px]">
          <svg viewBox="0 0 20 15" className="h-[15px] w-5" fill="none" stroke="#605e5c" strokeWidth="1.500"><path d="M1 1h18v13H1z" /><path d="M4 6V4h3M13 4h3v2M4 9v2h3M13 11h3V9" strokeWidth="1.200" /></svg>
        </button>
      </div>
    </footer>
  );
}

export default function App() {
  return (
    <div className="flex h-screen flex-col overflow-hidden bg-white font-['Open_Sans','Segoe_UI',sans-serif]">
      <TitleBar />
      <Ribbon />
      <div className="flex min-h-0 flex-1">
        <LeftNav />
        <div className="flex min-w-0 flex-1 flex-col">
          <div className="flex min-h-0 flex-1 overflow-hidden">
            <main className="flex min-w-0 flex-1 px-[177px]"><Report /></main>
            <FiltersPane />
          </div>
          <PageTabs />
        </div>
        <RightRail />
      </div>
      <StatusBar />
    </div>
  );
}
